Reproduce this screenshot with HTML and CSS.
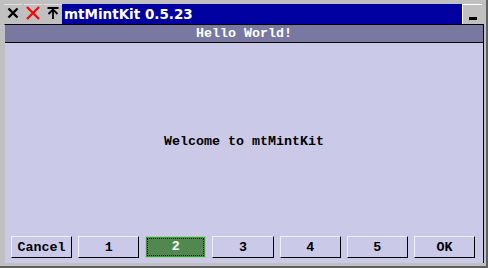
FILE: index.html
```html
<!DOCTYPE html>
<html lang="en">
<head>
    <meta charset="UTF-8">
    <title>mtMintKit 0.5.23</title>
    <link rel="stylesheet" href="styles.css">
</head>
<body>
    <div class="frame">
        <div class="titlebar">
            <span class="tbtn">
                <svg width="18" height="18" viewBox="0 0 18 18"><path d="M4.5 4.5L13.5 13.5M13.5 4.5L4.5 13.5" stroke="#000" stroke-width="2.4"/></svg>
            </span>
            <span class="tbtn">
                <svg width="18" height="18" viewBox="0 0 18 18"><path d="M3 3L15 15M15 3L3 15" stroke="#f00" stroke-width="2.2"/></svg>
            </span>
            <span class="tbtn">
                <svg width="18" height="18" viewBox="0 0 18 18"><path d="M3.5 4H14.5M9 5.5V15M4.5 10L9 5.5L13.5 10" stroke="#000" stroke-width="1.8" fill="none"/></svg>
            </span>
            <span class="title">mtMintKit 0.5.23</span>
            <span class="minbtn"><i></i></span>
        </div>
        <div class="window">
            <div class="header">Hello World!</div>
            <div class="content">
                <div class="message">Welcome to mtMintKit</div>
                <div class="buttons">
                    <button class="btn">Cancel</button>
                    <button class="btn">1</button>
                    <button class="btn active"><span>2</span></button>
                    <button class="btn">3</button>
                    <button class="btn">4</button>
                    <button class="btn">5</button>
                    <button class="btn">OK</button>
                </div>
            </div>
        </div>
    </div>
</body>
</html>
```

FILE: styles.css
```css
*{
    padding: 0;
    margin: 0;
    box-sizing: border-box;
}
body{
    background: #c0c0c0;
}
.frame{
    width: 488px;
    height: 268px;
    background: #c0c0c0;
    padding: 4px 2px 3px 4px;
    border-right: 2px solid #606060;
    border-bottom: 2px solid #606060;
    display: flex;
    flex-direction: column;
}
.titlebar{
    display: flex;
    height: 20px;
    gap: 2px;
    margin-right: 2px;
}
.tbtn{
    width: 18px;
    height: 18px;
    background: #c0c0c0;
    border-top: 1px solid #e0e0e0;
    display: flex;
}
.tbtn svg{
    margin-top: -1px;
}
.title{
    flex: 1;
    height: 20px;
    margin-left: -2px;
    background: #0000a0;
    color: #fff;
    font: bold 13.5px "DejaVu Sans", sans-serif;
    line-height: 20px;
    padding-left: 2px;
}
.minbtn{
    width: 20px;
    height: 20px;
    margin-left: -2px;
    background: #c0c0c0;
    border-top: 1px solid #fff;
    border-left: 1px solid #fff;
    display: flex;
    align-items: flex-end;
    justify-content: center;
    padding-bottom: 4px;
}
.minbtn i{
    width: 8px;
    height: 3px;
    background: #000;
}
.window{
    flex: 1;
    display: flex;
    flex-direction: column;
    border: 1px solid #000;
    border-left-color: #c0c0c0;
    border-bottom: none;
}
.header{
    height: 18px;
    background: #7878a0;
    color: #fff;
    text-align: center;
    font: bold 13.33px "Liberation Mono", monospace;
    line-height: 17px;
    border-bottom: 1px solid #000;
}
.content{
    flex: 1;
    background: #cacae8;
    display: flex;
    flex-direction: column;
}
.message{
    flex: 1;
    display: flex;
    align-items: center;
    justify-content: center;
    padding-top: 4px;
    font: bold 13.33px "Liberation Mono", monospace;
    color: #000;
}
.buttons{
    display: grid;
    grid-template-columns: repeat(7, 1fr);
    gap: 6px;
    padding: 0 8px 5px 6px;
}
.btn{
    height: 22px;
    background: #cacae8;
    border: 1px solid #000;
    border-top-color: #f0f0ff;
    border-left-color: #f0f0ff;
    font: bold 13.33px "Liberation Mono", monospace;
    color: #000;
}
.btn.active{
    background: #508850;
    border: 1px solid #90e090;
    color: #fff;
    padding: 1px;
}
.btn.active span{
    display: block;
    height: 100%;
    border: 1px dotted #000;
    line-height: 16px;
}
```
